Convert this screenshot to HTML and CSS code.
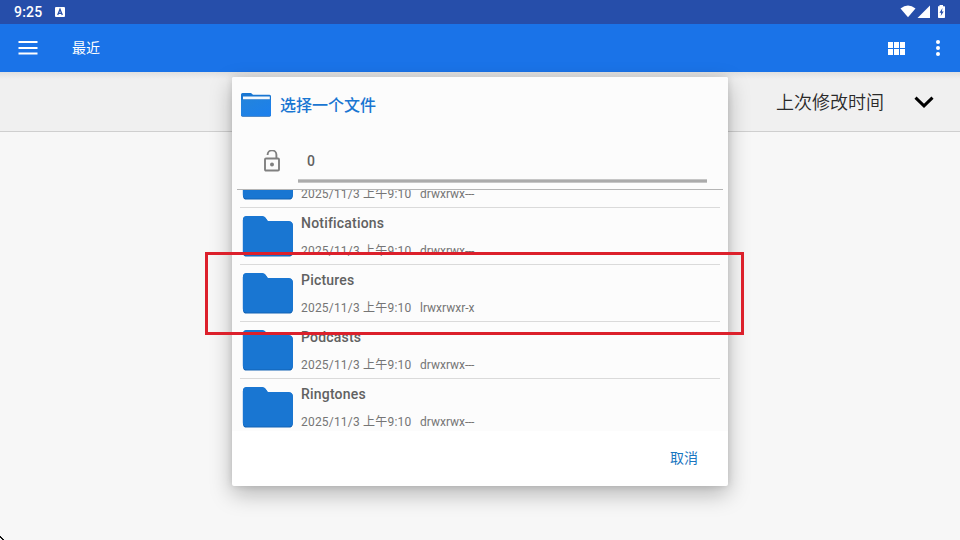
FILE: index.html
```html
<!DOCTYPE html>
<html lang="zh-CN">
<head>
<meta charset="utf-8">
<title>选择一个文件</title>
<link rel="stylesheet" href="styles.css">
</head>
<body>
<svg class="defs" width="0" height="0" aria-hidden="true">
  <symbol id="folder" viewBox="-.4 -.4 51 42">
    <path d="M4 1H20Q22 1 23 2.500L25.500 6H46Q50.500 6 50.500 10.500V37Q50.500 41.200 46 41.200H4.500Q.5 41.200 .5 37V4.500Q.5 1 4 1Z" fill="#1262b4"/>
    <path d="M4 .5H20Q22 .5 23 2L25.500 5.500H46Q50.500 5.500 50.500 10V36Q50.500 40 46 40H4.500Q.5 40 .5 36V4.500Q.5 .5 4 .5Z" fill="#1976d2"/>
  </symbol>
</svg>
<div class="screen">
  <div class="statusbar">
    <span class="clock">9:25</span>
    <svg class="badge" width="10" height="10" viewBox="0 0 10 10"><rect width="10" height="10" rx="1" fill="#fff"/><path d="M2.700 8 5 2.300 7.300 8M3.500 6.300H6.500" fill="none" stroke="#264eaa" stroke-width="1.300"/></svg>
    <svg class="signals" width="46" height="14" viewBox="0 0 46 14" fill="#fff">
      <path d="M.5 3.500Q8 -2.500 15.500 3.500L8 12.300Z"/>
      <path d="M17.500 13 30 .5V13Z"/>
      <path d="M38 1.300H39.500V0H43V1.300H44.500Q45 1.300 45 2V12.300Q45 13 44.300 13H38.700Q38 13 38 12.300Z"/>
      <path d="M42.500 3 39.500 7.800H41.200L40.700 11 43.700 6.400H41.900Z" fill="#264eaa"/>
    </svg>
  </div>
  <header class="appbar">
    <svg width="20" height="14" viewBox="0 0 20 14" fill="#fff"><path d="M.5 0H19.500V2H.5ZM.5 6H19.500V8H.5ZM.5 11.500H19.500V13.500H.5Z"/></svg>
    <h1 class="apptitle">最近</h1>
    <svg class="grid" width="17" height="13" viewBox="0 0 17 13" fill="#fff"><path d="M0 0H5V6H0ZM6 0H11V6H6ZM12 0H17V6H12ZM0 7H5V13H0ZM6 7H11V13H6ZM12 7H17V13H12Z"/></svg>
    <svg class="more" width="4" height="16" viewBox="0 0 4 16" fill="#fff"><circle cx="2" cy="2" r="2"/><circle cx="2" cy="8" r="2"/><circle cx="2" cy="14" r="2"/></svg>
  </header>
  <div class="sortbar">
    <span class="sortlabel">上次修改时间</span>
    <svg width="20" height="13" viewBox="0 0 20 13"><path d="M1.500 2.600 10 10.900 18.500 2.600" fill="none" stroke="#000" stroke-width="3"/></svg>
  </div>

  <section class="dialog">
    <div class="dialoghead">
      <svg width="30" height="24" viewBox="0 0 30 24">
        <defs><linearGradient id="face" x1="0" y1="0" x2="1" y2="1"><stop offset="0" stop-color="#2384dc"/><stop offset="1" stop-color="#1c7fed"/></linearGradient></defs>
        <path d="M1.500 0H10L12 1.700H28.500Q30 1.700 30 3.200V12H0V1.500Q0 0 1.500 0Z" fill="#1976d2"/>
        <path d="M2 3.500H28.800V8H2Z" fill="#f3f8fd"/>
        <path d="M0 6.500H30V22Q30 23.800 28.500 23.800H1.500Q0 23.800 0 22Z" fill="#1764b8"/>
        <path d="M0 6.500H30V21.500Q30 23 28.500 23H1.500Q0 23 0 21.500Z" fill="url(#face)"/>
      </svg>
      <h2>选择一个文件</h2>
    </div>
    <div class="pathrow">
      <svg width="16" height="22" viewBox="0 0 16 22"><path d="M3.600 5V4.800A4.400 4.400 0 0 1 12.400 4.800V8M2 8.500H14Q15 8.500 15 9.500V19.500Q15 20.500 14 20.500H2Q1 20.500 1 19.500V9.500Q1 8.500 2 8.500Z" fill="none" stroke="#808080" stroke-width="1.900"/><circle cx="8" cy="14.500" r="2" fill="#808080"/></svg>
      <div class="path">0</div>
    </div>
    <div class="list">
      <div class="rows">
        <div class="row"><svg class="folder"><use href="#folder"/></svg><div><div class="name"></div><div class="meta"><span class="date">2025/11/3 上午9:10</span><span>drwxrwx<span class="dashes">---</span></span></div></div></div>
        <div class="row"><svg class="folder"><use href="#folder"/></svg><div><div class="name">Notifications</div><div class="meta"><span class="date">2025/11/3 上午9:10</span><span>drwxrwx<span class="dashes">---</span></span></div></div></div>
        <div class="row"><svg class="folder"><use href="#folder"/></svg><div><div class="name">Pictures</div><div class="meta"><span class="date">2025/11/3 上午9:10</span><span>lrwxrwxr-x</span></div></div></div>
        <div class="row"><svg class="folder"><use href="#folder"/></svg><div><div class="name">Podcasts</div><div class="meta"><span class="date">2025/11/3 上午9:10</span><span>drwxrwx<span class="dashes">---</span></span></div></div></div>
        <div class="row"><svg class="folder"><use href="#folder"/></svg><div><div class="name">Ringtones</div><div class="meta"><span class="date">2025/11/3 上午9:10</span><span>drwxrwx<span class="dashes">---</span></span></div></div></div>
      </div>
    </div>
    <div class="actions"><button>取消</button></div>
  </section>

  <div class="highlight"></div>
  <svg class="pointer" width="4" height="4" viewBox="0 0 4 4"><path d="M0 0H1V1H2V2H3V3H4V4H2V3H1V2H0Z" fill="#111"/></svg>
</div>
</body>
</html>
```
FILE: styles.css
```css
* { box-sizing: border-box; }
body { margin: 0; font-family: Roboto, "Noto Sans CJK SC", sans-serif; }
svg { display: block; flex: none; }
h1, h2 { margin: 0; }
.defs { position: absolute; }

.screen {
  position: relative;
  width: 960px;
  height: 540px;
  overflow: hidden;
  background: #f7f7f7;
}

.statusbar {
  display: flex;
  align-items: center;
  height: 24px;
  padding: 0 14px;
  background: #264eaa;
  color: #fff;
}
.clock { width: 41px; font-size: 14px; font-weight: 500; letter-spacing: .2px; }
.signals { margin: 0 0 1px auto; }

.appbar {
  display: flex;
  align-items: center;
  height: 48px;
  padding: 0 20px 0 18px;
  background: #1a73e8;
  color: #fff;
}
.apptitle { margin-left: 34px; padding-bottom: 2px; font-size: 14px; font-weight: 400; }
.grid { margin-left: auto; }
.more { margin-left: 31px; }

.sortbar {
  display: flex;
  align-items: center;
  justify-content: flex-end;
  height: 60px;
  padding: 0 26px 0 0;
  border-bottom: 1px solid #cfcfcf;
  background: linear-gradient(#e0e0e0, #f0f0f0 7px);
}
.sortlabel {
  margin-right: 30px;
  padding-bottom: 2px;
  color: #2a2a2a;
  font-family: "Noto Sans CJK SC", sans-serif;
  font-size: 18px;
  font-weight: 350;
}

.dialog {
  position: absolute;
  left: 232px;
  top: 77px;
  width: 496px;
  height: 409px;
  border-radius: 2px;
  background: #fff;
  box-shadow: 0 8px 22px rgba(0, 0, 0, .27), 0 0 7px rgba(0, 0, 0, .12);
}
.dialoghead {
  display: flex;
  align-items: center;
  gap: 9px;
  height: 56px;
  padding-left: 9px;
  border-radius: 2px 2px 0 0;
  background: #fcfcfc;
}
.dialoghead h2 { padding-bottom: 2px; color: #1976d2; font-size: 16px; font-weight: 500; }

.pathrow {
  display: flex;
  align-items: center;
  gap: 18px;
  height: 56px;
  padding: 0 21px 0 32px;
  background: #fcfcfc;
}
.path {
  flex: 1;
  height: 44px;
  margin-top: -1px;
  padding-left: 9px;
  background:
    linear-gradient(#ababab, #ababab) 0 41px / 100% 2px no-repeat,
    linear-gradient(#c6c6c6, #c6c6c6) 0 40px / 100% 4px no-repeat;
  color: #616161;
  font-size: 14px;
  font-weight: 500;
  line-height: 44px;
}

.list {
  height: 242px;
  overflow: hidden;
  background: linear-gradient(#b5b5b5, #b5b5b5) 5px 0 / 486px 1px no-repeat #fcfcfc;
  padding-top: 1px;
}
.rows { height: 241px; overflow: hidden; display: flex; flex-direction: column; justify-content: flex-end; }
.row {
  display: flex;
  flex: none;
  gap: 8px;
  height: 57px;
  margin: 0 8px;
  padding: 7px 0 0 2px;
  border-bottom: 1px solid #dadada;
}
.row:last-child { height: 52px; border: 0; }
.folder { width: 51px; height: 42px; }
.name {
  height: 16px;
  color: #616161;
  font-size: 14px;
  font-weight: 500;
  line-height: 16px;
  letter-spacing: .2px;
}
.meta {
  display: flex;
  gap: 9px;
  height: 16px;
  margin-top: 12px;
  color: #757575;
  font-size: 12px;
  line-height: 16px;
  white-space: nowrap;
}
.date { width: 110px; letter-spacing: .2px; }
.dashes { letter-spacing: -.3px; }

.actions {
  display: flex;
  align-items: center;
  justify-content: flex-end;
  height: 54px;
  padding: 0 30px 2px 0;
}
.actions button {
  padding: 0;
  border: 0;
  background: none;
  color: #1976bf;
  font: 14px Roboto, "Noto Sans CJK SC", sans-serif;
}

.highlight {
  position: absolute;
  left: 205px;
  top: 252px;
  width: 539px;
  height: 83px;
  border: 3px solid #dc202b;
}
.pointer { position: absolute; left: 0; top: 536px; }
```
